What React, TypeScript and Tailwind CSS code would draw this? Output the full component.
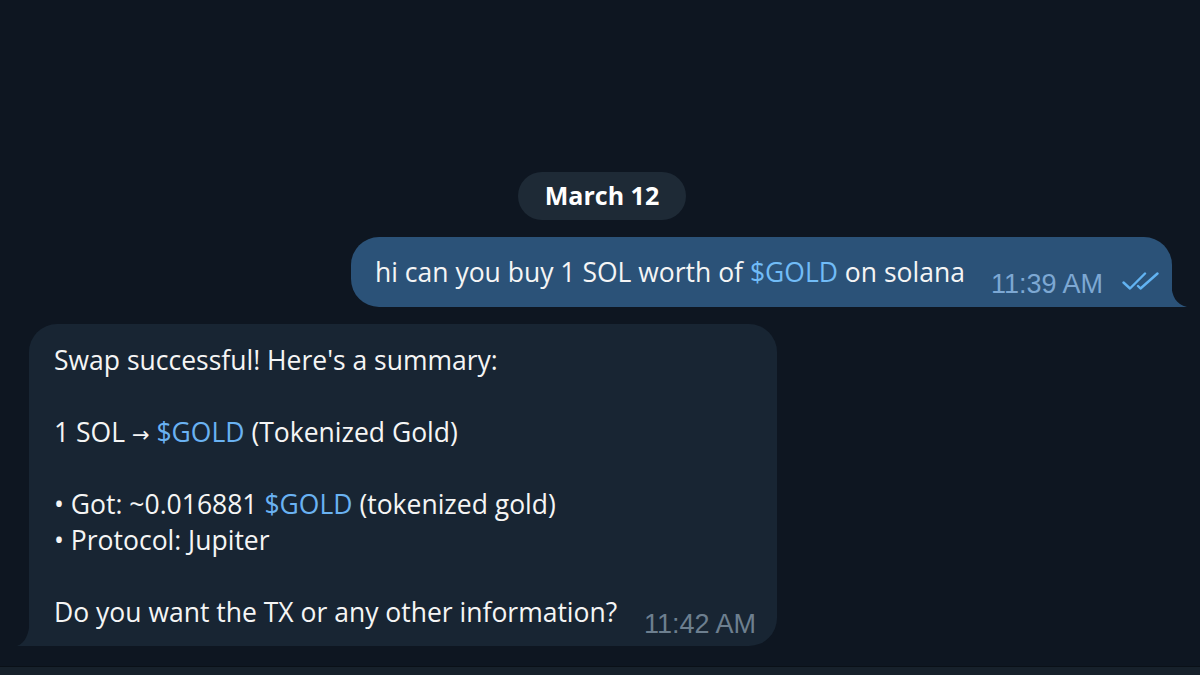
import React from 'react';

const sans = { fontFamily: '"Open Sans", "DejaVu Sans", sans-serif' };
const meta = { fontFamily: '"Liberation Sans", Arial, sans-serif' };

function ReadChecks() {
  return (
    <svg width="38" height="18" viewBox="0 0 38 18" fill="none" className="mb-[7px]">
      <path d="M1.5 10.5 L8 16.5 L23 1.5" stroke="#62b3f2" strokeWidth="2.4" strokeLinecap="round" strokeLinejoin="round" />
      <path d="M16 14 L18.5 16.5 L35.5 1.5" stroke="#62b3f2" strokeWidth="2.4" strokeLinecap="round" strokeLinejoin="round" />
    </svg>
  );
}

function OutgoingBubble() {
  return (
    <div className="relative w-[821px] rounded-[28px] rounded-br-none bg-[#2b5278] pl-[24px] pr-[12px] pt-[17px] pb-[17px]">
      <div className="flex items-end justify-between">
        <span className="text-[26.5px] leading-[36px] text-[#f5f5f5]" style={sans}>
          hi can you buy 1 SOL worth of <span className="text-[#71bcf7]">$GOLD</span> on solana
        </span>
        <div className="-mb-[7px] flex items-end gap-[19px]">
          <span className="text-[27px] leading-[26px] text-[#7da8d3]" style={meta}>11:39 AM</span>
          <ReadChecks />
        </div>
      </div>
      {/* tail */}
      <svg width="16" height="24" viewBox="0 0 16 24" className="absolute bottom-0 right-[-15px]">
        <path d="M0 0 C1 14 5 21 16 24 L0 24 Z" fill="#2b5278" />
      </svg>
    </div>
  );
}

function IncomingBubble() {
  return (
    <div className="relative w-[748px] rounded-[28px] rounded-bl-none bg-[#182533] pl-[25px] pr-[21px] pt-[18px] pb-[16px]">
      <div className="text-[26.5px] leading-[36px] text-[#f5f5f5]" style={sans}>
        <p>Swap successful! Here's a summary:</p>
        <p className="h-[36px]"></p>
        <p className="h-[36px]">
          1 SOL{' '}
          <span style={{ fontFamily: '"DejaVu Sans", sans-serif' }} className="text-[21px] leading-none">
            →
          </span>{' '}
          <span className="text-[#6ab2f2]">$GOLD</span> (Tokenized Gold)
        </p>
        <p className="h-[36px]"></p>
        <p>
          • Got: ~0.016881 <span className="text-[#6ab2f2]">$GOLD</span> (tokenized gold)
        </p>
        <p>• Protocol: Jupiter</p>
        <p className="h-[36px]"></p>
        <div className="flex h-[36px] items-end justify-between">
          <span>Do you want the TX or any other information?</span>
          <span className="-mb-[7px] text-[27px] leading-[26px] text-[#6d7f8f]" style={meta}>11:42 AM</span>
        </div>
      </div>
      {/* tail */}
      <svg width="13" height="26" viewBox="0 0 13 26" className="absolute bottom-0 left-[-12px]">
        <path d="M13 0 C12 15 8 23 0 26 L13 26 Z" fill="#182533" />
      </svg>
    </div>
  );
}

export default function App() {
  return (
    <div className="flex h-[675px] w-[1200px] flex-col overflow-hidden bg-[#0e1621]">
      <div className="flex flex-1 flex-col justify-end pb-[20px]">
        <div className="mb-[17px] flex justify-center">
          <div
            className="ml-[4px] flex h-[48px] w-[168px] items-center justify-center rounded-full bg-[#1e2a36] text-[25px] font-bold text-white"
            style={sans}
          >
            March 12
          </div>
        </div>
        <div className="mb-[17px] flex justify-end pr-[28px]">
          <OutgoingBubble />
        </div>
        <div className="flex justify-start pl-[29px]">
          <IncomingBubble />
        </div>
      </div>
      <div className="h-[9px] border-t border-[#0a1017] bg-[#17212b]" />
    </div>
  );
}
